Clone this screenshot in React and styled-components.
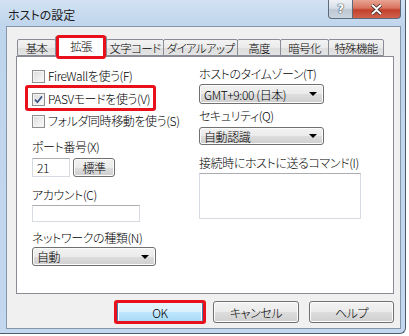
import styled, { createGlobalStyle, css } from 'styled-components';

const RED = '#e8101b';

const GlobalStyle = createGlobalStyle`
  html, body {
    margin: 0;
    background: #fff;
  }
  body {
    font-family: "Noto Sans CJK JP", "Noto Sans", sans-serif;
    font-size: 12px;
    font-weight: 300;
    font-feature-settings: "palt";
    letter-spacing: -0.4px;
    color: #000;
  }
`;

// red frame drawn over a marked control
const marked = css`
  position: relative;
  &::after {
    content: '';
    position: absolute;
    inset: ${(p) => p.$mark};
    border: 3px solid ${RED};
    border-radius: 3px;
    pointer-events: none;
  }
`;

const Window = styled.div`
  width: 406px;
  height: 334px;
  box-sizing: border-box;
  display: flex;
  flex-direction: column;
  background: linear-gradient(#d2e2f3, #bfd5ec 26px, #c3d8ee);
  border-right: 1px solid #4f5d6c;
  border-bottom: 1px solid #4f5d6c;
  border-bottom-right-radius: 6px;
`;

const TitleBar = styled.div`
  height: 26px;
  display: flex;
  justify-content: space-between;
  align-items: flex-start;
  padding: 0 4px 0 8px;
`;

const Caption = styled.div`
  padding-top: 7px;
  line-height: 16px;
  font-weight: 400;
  color: #1c1c1c;
  letter-spacing: 0;
`;

const Controls = styled.div`
  display: flex;
  height: 19px;
`;

const CtlButton = styled.div`
  width: ${(p) => p.$w}px;
  box-sizing: border-box;
  display: flex;
  align-items: center;
  justify-content: center;
  border: 1px solid #5b6b7c;
  border-top: 0;
  background: ${(p) =>
    p.$close
      ? 'linear-gradient(#e8a493, #d8735f 45%, #c3402b 55%, #d0624c)'
      : 'linear-gradient(#eef2f6, #d7dee6 45%, #bcc7d3 55%, #ccd6e0)'};
  border-radius: ${(p) => (p.$close ? '0 0 4px 0' : '0 0 0 4px')};
  & + & {
    border-left: 0;
  }
`;

const Question = styled.span`
  font-family: "DejaVu Sans", sans-serif;
  font-weight: bold;
  font-size: 12px;
  color: #fff;
  text-shadow: 0 0 1px #3a4756, 0 0 1px #3a4756, 0 0 1px #3a4756;
`;

const Body = styled.div`
  flex: 1;
  display: flex;
  padding: 0 4px 4px 6px;
`;

const Client = styled.div`
  flex: 1;
  display: flex;
  flex-direction: column;
  background: #f0f0f0;
  border: 1px solid #8396ab;
  padding: 9px 6px 0 9px;
`;

const TabStrip = styled.div`
  height: 20px;
  display: flex;
  align-items: flex-end;
  margin-left: 1px;
`;

const Tab = styled.div`
  width: ${(p) => p.$w}px;
  height: ${(p) => (p.$active ? 21 : 17)}px;
  box-sizing: border-box;
  display: flex;
  align-items: center;
  justify-content: center;
  font-size: 11.5px;
  letter-spacing: -0.7px;
  border: 1px solid #898c95;
  border-bottom: ${(p) => (p.$active ? '0' : '1px solid #898c95')};
  border-radius: 2px 2px 0 0;
  background: ${(p) => (p.$active ? '#fff' : 'linear-gradient(#f3f3f3, #ebebeb 50%, #dddddd 51%, #e4e4e4)')};
  margin-bottom: ${(p) => (p.$active ? -1 : 0)}px;
  padding-bottom: ${(p) => (p.$active ? 3 : 0)}px;
  white-space: nowrap;
  z-index: ${(p) => (p.$active ? 1 : 0)};
  & + & {
    margin-left: -1px;
  }
  ${(p) => p.$mark && marked}
`;

const Panel = styled.div`
  height: 238px;
  box-sizing: border-box;
  background: #fff;
  border: 1px solid #898c95;
  display: grid;
  grid-template-columns: 167px 1fr;
  padding: 0 0 0 15px;
`;

const Column = styled.div`
  display: flex;
  flex-direction: column;
  align-items: flex-start;
  padding-top: ${(p) => p.$top}px;
`;

const Label = styled.div`
  line-height: 16px;
  margin-top: ${(p) => p.$gap || 0}px;
  white-space: nowrap;
`;

const CheckRow = styled.label`
  display: inline-flex;
  align-items: center;
  gap: 3px;
  line-height: 16px;
  margin-top: ${(p) => p.$gap || 0}px;
  white-space: nowrap;
  ${(p) => p.$mark && marked}
`;

const Box = styled.span`
  width: 13px;
  height: 13px;
  box-sizing: border-box;
  border: 1px solid #8e8f8f;
  background: linear-gradient(135deg, #dcdcdc, #fbfbfb);
  box-shadow: inset 0 0 0 1px #f4f4f4;
  display: flex;
  align-items: center;
  justify-content: center;
`;

const Row = styled.div`
  display: flex;
  gap: 3px;
  margin-top: ${(p) => p.$gap || 0}px;
`;

const TextBox = styled.div`
  width: ${(p) => p.$w}px;
  height: ${(p) => p.$h}px;
  box-sizing: border-box;
  border: 1px solid #d6dbe1;
  border-top-color: #abadb3;
  background: #fff;
  padding-left: 4px;
  line-height: ${(p) => p.$h - 2}px;
  margin-top: ${(p) => p.$gap || 0}px;
`;

const buttonFace = css`
  border: 1px solid #707070;
  border-radius: 3px;
  background: linear-gradient(#f2f2f2, #ebebeb 50%, #dddddd 51%, #cfcfcf);
  box-shadow: inset 0 0 0 1px #fcfcfc;
`;

const Combo = styled.div`
  width: ${(p) => p.$w}px;
  height: ${(p) => p.$h}px;
  box-sizing: border-box;
  display: flex;
  align-items: center;
  justify-content: space-between;
  padding: 0 6px 0 4px;
  margin-top: ${(p) => p.$gap || 0}px;
  white-space: nowrap;
  ${buttonFace}
`;

const Arrow = styled.span`
  width: 0;
  height: 0;
  border-left: 4px solid transparent;
  border-right: 4px solid transparent;
  border-top: 4px solid #000;
`;

const Button = styled.div`
  width: ${(p) => p.$w}px;
  height: ${(p) => p.$h}px;
  box-sizing: border-box;
  display: flex;
  align-items: center;
  justify-content: center;
  ${buttonFace}
  ${(p) =>
    p.$default &&
    css`
      border-color: #3c7fb1;
      background: linear-gradient(#eaf6fd, #d9f0fc 50%, #bee6fd 51%, #a7d9f5);
    `}
  ${(p) => p.$mark && marked}
`;

const TextArea = styled.div`
  width: 162px;
  height: 46px;
  box-sizing: border-box;
  border: 1px solid #d6dbe1;
  border-top-color: #abadb3;
  background: #fff;
  margin-top: 2px;
`;

const Footer = styled.div`
  display: flex;
  justify-content: flex-end;
  gap: 10px;
  margin-top: 7px;
`;

function Check({ checked }) {
  return (
    <Box>
      {checked && (
        <svg width="9" height="9" viewBox="0 0 9 9">
          <path d="M1 4.6 L3.4 7.2 L8 1.4" fill="none" stroke="#3d5486" strokeWidth="1.7" />
        </svg>
      )}
    </Box>
  );
}

const tabs = [
  ['基本', 39],
  ['拡張', 52],
  ['文字コード', 58],
  ['ダイアルアップ', 75],
  ['高度', 44],
  ['暗号化', 49],
  ['特殊機能', 56],
];

export default function App() {
  return (
    <>
      <GlobalStyle />
      <Window>
        <TitleBar>
          <Caption>ホストの設定</Caption>
          <Controls>
            <CtlButton $w={25}>
              <Question>?</Question>
            </CtlButton>
            <CtlButton $w={48} $close>
              <svg width="13" height="11" viewBox="0 0 13 11">
                <path
                  d="M2 1 L6.5 5 L11 1 M2 10 L6.5 6 L11 10"
                  fill="none"
                  stroke="#3a2a28"
                  strokeWidth="3.6"
                />
                <path
                  d="M2 1 L6.5 5 L11 1 M2 10 L6.5 6 L11 10"
                  fill="none"
                  stroke="#fff"
                  strokeWidth="2"
                />
              </svg>
            </CtlButton>
          </Controls>
        </TitleBar>
        <Body>
          <Client>
            <TabStrip>
              {tabs.map(([name, w], i) => (
                <Tab key={name} $w={w} $active={i === 1} $mark={i === 1 ? '-2px 0 -2px 0' : null}>
                  {name}
                </Tab>
              ))}
            </TabStrip>
            <Panel>
              <Column $top={11}>
                <CheckRow>
                  <Check />
                  FireWallを使う(F)
                </CheckRow>
                <CheckRow $gap={7} $mark="-6px -6px -4px -7px">
                  <Check checked />
                  PASVモードを使う(V)
                </CheckRow>
                <CheckRow $gap={6}>
                  <Check />
                  フォルダ同時移動を使う(S)
                </CheckRow>
                <Label $gap={10}>ポート番号(X)</Label>
                <Row $gap={3}>
                  <TextBox $w={38} $h={19}>21</TextBox>
                  <Button $w={42} $h={19}>標準</Button>
                </Row>
                <Label $gap={10}>アカウント(C)</Label>
                <TextBox $w={108} $h={17} $gap={2} />
                <Label $gap={8}>ネットワークの種類(N)</Label>
                <Combo $w={124} $h={19} $gap={1}>
                  自動
                  <Arrow />
                </Combo>
              </Column>
              <Column $top={9}>
                <Label>ホストのタイムゾーン(T)</Label>
                <Combo $w={125} $h={20} $gap={2}>
                  GMT+9:00 (日本)
                  <Arrow />
                </Combo>
                <Label $gap={4}>セキュリティ(Q)</Label>
                <Combo $w={125} $h={18} $gap={3}>
                  自動認識
                  <Arrow />
                </Combo>
                <Label $gap={10}>接続時にホストに送るコマンド(I)</Label>
                <TextArea />
              </Column>
            </Panel>
            <Footer>
              <Button $w={86} $h={22} $default $mark="-2px -4px -2px -4px">
                OK
              </Button>
              <Button $w={86} $h={22}>キャンセル</Button>
              <Button $w={85} $h={22}>ヘルプ</Button>
            </Footer>
          </Client>
        </Body>
      </Window>
    </>
  );
}
